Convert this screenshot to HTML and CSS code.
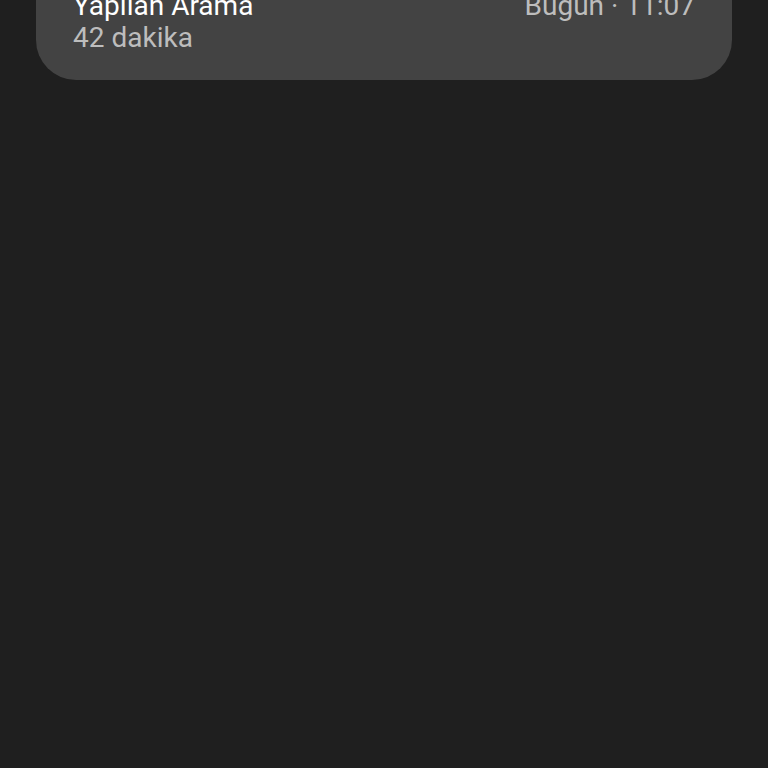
FILE: index.html
```html
<html><head>
<meta charset="utf-8">
<link rel="stylesheet" href="styles.css">
</head>
<body>
  <div class="call-card">
    <div class="call-row">
      <span class="call-type">Yapılan Arama</span>
      <span class="call-time">Bugün · 11:07</span>
    </div>
    <div class="call-duration">42 dakika</div>
  </div>
</body></html>
```

FILE: styles.css
```css
:root {
  --background: #1f1f1f;
  --card: #434343;
  --text: #ffffff;
  --muted: #bdbdbd;
}

body {
  margin: 0;
  background: var(--background);
  font-family: Roboto, 'Noto Sans', sans-serif;
  height: 768px;
  overflow: hidden;
}

.call-card {
  background: var(--card);
  margin: -50px 36px 0;
  padding: 40px 37px 26px;
  border-radius: 0 0 40px 40px;
}

.call-row {
  display: flex;
  justify-content: space-between;
  align-items: baseline;
}

.call-type {
  color: var(--text);
  font-size: 28px;
  line-height: 32px;
}

.call-time {
  color: var(--muted);
  font-size: 28px;
  line-height: 32px;
}

.call-duration {
  color: var(--muted);
  font-size: 28px;
  line-height: 32px;
}
```
